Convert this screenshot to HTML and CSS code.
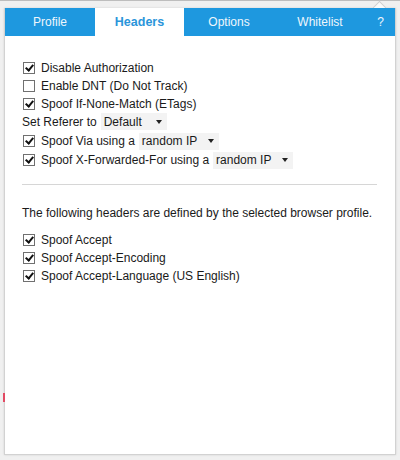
FILE: index.html
```html
<!DOCTYPE html>
<html>
<head>
<meta charset="utf-8">
<link rel="stylesheet" href="styles.css">
</head>
<body>
<div class="topline"></div>
<div class="popup">
  <div class="arrow"></div>
  <nav class="tabs">
    <div class="tab t1">Profile</div>
    <div class="tab t2 active">Headers</div>
    <div class="tab t3">Options</div>
    <div class="tab t4">Whitelist</div>
    <div class="tab t5">?</div>
  </nav>
  <main class="content">
    <div class="row"><span class="cb on"></span>Disable Authorization</div>
    <div class="row"><span class="cb"></span>Enable DNT (Do Not Track)</div>
    <div class="row"><span class="cb on"></span>Spoof If-None-Match (ETags)</div>
    <div class="row plain">Set Referer to <span class="sel s-def">Default<span class="caret"></span></span></div>
    <div class="row tall"><span class="cb on"></span>Spoof Via using a <span class="sel s-ip">random IP<span class="caret"></span></span></div>
    <div class="row"><span class="cb on"></span>Spoof X-Forwarded-For using a <span class="sel s-ip">random IP<span class="caret"></span></span></div>
    <hr class="sep">
    <p class="note">The following headers are defined by the selected browser profile.</p>
    <div class="row"><span class="cb on"></span>Spoof Accept</div>
    <div class="row"><span class="cb on"></span>Spoof Accept-Encoding</div>
    <div class="row"><span class="cb on"></span>Spoof Accept-Language (US English)</div>
  </main>
</div>
<div class="redmark"></div>
</body>
</html>
```
FILE: styles.css
```css
html, body {
  margin: 0;
  padding: 0;
}
body {
  width: 400px;
  height: 460px;
  background: #f0f0f0;
  font-family: "Liberation Sans", Arial, sans-serif;
  color: #1a1a1a;
  position: relative;
  overflow: hidden;
}
.topline {
  height: 1px;
  background: #bdbdbd;
}
.popup {
  position: relative;
  margin: 7px 0 0 4px;
  width: 390px;
  height: 446px;
  background: #fff;
  border: 1px solid #d2d2d2;
  border-top: none;
  box-shadow: 0 0 2px rgba(0,0,0,0.12);
}
.arrow {
  position: absolute;
  top: -5px;
  right: 10px;
  width: 10px;
  height: 10px;
  background: #fafafa;
  border-left: 1px solid #cfcfcf;
  border-top: 1px solid #cfcfcf;
  transform: rotate(45deg);
}
.tabs {
  position: relative;
  display: flex;
  height: 28px;
  background: #1e98df;
  margin-top: 1px;
}
.tab {
  display: flex;
  align-items: center;
  justify-content: center;
  color: #eef6fc;
  font-size: 12px;
}
.t1 { width: 90px; }
.t2 { width: 89px; }
.t3 { width: 90px; }
.t4 { width: 92px; }
.t5 { flex: 1; }
.tab.active {
  background: #fff;
  color: #2a95da;
  font-weight: bold;
  font-size: 12.5px;
}
.content {
  padding: 23px 17px 0 17px;
  font-size: 12px;
}
.row {
  display: flex;
  align-items: center;
  height: 18px;
  white-space: nowrap;
}
.row.plain { height: 17px; }
.row.tall { height: 20px; margin-top: 1px; }
.cb {
  box-sizing: border-box;
  width: 12px;
  height: 12px;
  border: 1px solid #707070;
  background: #fff;
  margin: 0 6px 0 1px;
  flex: none;
  position: relative;
}
.cb.on::after {
  content: "";
  position: absolute;
  left: 3px;
  top: 0px;
  width: 3px;
  height: 6px;
  border-right: 2px solid #111;
  border-bottom: 2px solid #111;
  transform: rotate(40deg);
}
.sel {
  display: inline-flex;
  align-items: center;
  height: 17px;
  background: #f3f3f3;
  padding: 0 5px 0 3px;
  margin-left: 4px;
}
.s-def { width: 58px; }
.s-ip { width: 72px; }
.caret {
  margin-left: auto;
  width: 0;
  height: 0;
  border-left: 3px solid transparent;
  border-right: 3px solid transparent;
  border-top: 4px solid #222;
}
.sep {
  border: none;
  border-top: 1px solid #d6d6d6;
  margin: 15px 1px 0 0;
  height: 0;
}
.note {
  margin: 19px 0 9px 0;
  line-height: 18px;
}
.redmark {
  position: absolute;
  left: 3px;
  top: 393px;
  width: 2px;
  height: 9px;
  background: #e24a63;
}
```
